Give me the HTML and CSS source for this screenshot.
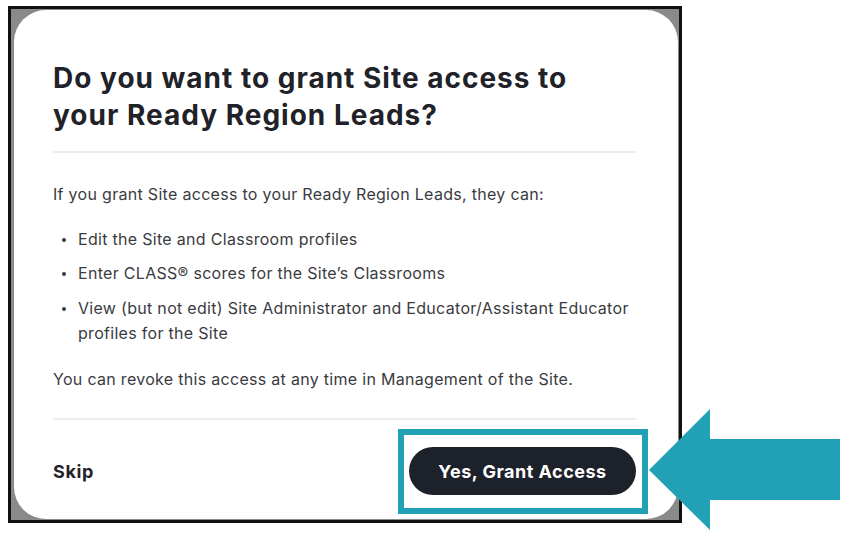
FILE: index.html
```html
<!DOCTYPE html>
<html>
<head>
<meta charset="utf-8">
<link rel="stylesheet" href="styles.css">
</head>
<body>
<div class="frame">
  <div class="modal">
    <h1 class="title">Do you want to grant Site access to your Ready Region Leads?</h1>
    <hr class="divider">
    <div class="body">
      <p class="lead">If you grant Site access to your Ready Region Leads, they can:</p>
      <ul class="list">
        <li>Edit the Site and Classroom profiles</li>
        <li>Enter CLASS® scores for the Site’s Classrooms</li>
        <li>View (but not edit) Site Administrator and Educator/Assistant Educator profiles for the Site</li>
      </ul>
      <p class="note">You can revoke this access at any time in Management of the Site.</p>
    </div>
    <hr class="divider divider-bottom">
    <div class="footer">
      <span class="skip">Skip</span>
      <div class="btn-wrap">
        <button class="btn">Yes, Grant Access</button>
        <div class="highlight"></div>
      </div>
    </div>
  </div>
</div>
<svg class="arrow" width="200" height="125" viewBox="0 0 200 125">
  <polygon points="0,61 61,0 61,30 191,30 191,91 61,91 61,121" fill="#21a0b6"/>
</svg>
</body>
</html>
```

FILE: styles.css
```css
html, body {
  margin: 0;
  padding: 0;
  background: #fff;
}
body {
  width: 849px;
  height: 539px;
  position: relative;
  overflow: hidden;
  font-family: "Inter", "Lato", sans-serif;
}
.frame {
  margin: 6px 0 0 8px;
  width: 664px;
  height: 510px;
  border: 3px solid #111;
  background: #8a8a8a;
  padding: 1px 1px 0 3px;
  box-sizing: content-box;
}
.modal {
  background: #fff;
  border-radius: 32px;
  height: 509px;
  box-sizing: border-box;
  padding: 50px 37px 0 39px;
  display: flex;
  flex-direction: column;
}
.title {
  margin: 0;
  font-size: 28px;
  line-height: 37px;
  font-weight: 700;
  color: #1f2229;
  letter-spacing: 1px;
  max-width: 540px;
}
.divider {
  border: 0;
  border-top: 2px solid #ececec;
  margin: 17px 0 0 0;
  width: 583px;
}
.divider-bottom {
  margin-top: 26px;
}
.body {
  padding-top: 29px;
  font-size: 16px;
  line-height: 25px;
  color: #3a3b3f;
  letter-spacing: 0.3px;
}
.lead {
  margin: 0 0 20px;
}
.list {
  margin: 0;
  padding: 0 0 0 25px;
  list-style: none;
}
.list li {
  position: relative;
  margin-bottom: 9px;
}
.list li::before {
  content: "";
  position: absolute;
  left: -16px;
  top: 11px;
  width: 4px;
  height: 4px;
  border-radius: 50%;
  background: #3a3b3f;
}
.list li:nth-child(2) {
  margin-bottom: 10px;
}
.note {
  margin: 21px 0 0;
}
.footer {
  display: flex;
  align-items: center;
  justify-content: space-between;
  width: 583px;
  margin-top: 27px;
}
.skip {
  font-size: 18px;
  font-weight: 700;
  letter-spacing: 0.6px;
  color: #1f2229;
}
.btn-wrap {
  position: relative;
}
.btn {
  display: block;
  width: 227px;
  height: 48px;
  border: 0;
  border-radius: 24px;
  background: #1d2129;
  color: #fff;
  font-family: inherit;
  font-size: 18px;
  font-weight: 700;
  letter-spacing: 0.5px;
}
.highlight {
  position: absolute;
  left: -11px;
  top: -18px;
  width: 250px;
  height: 85px;
  border: 6px solid #21a0b6;
  box-sizing: border-box;
}
.arrow {
  position: absolute;
  left: 649px;
  top: 409px;
}
```
